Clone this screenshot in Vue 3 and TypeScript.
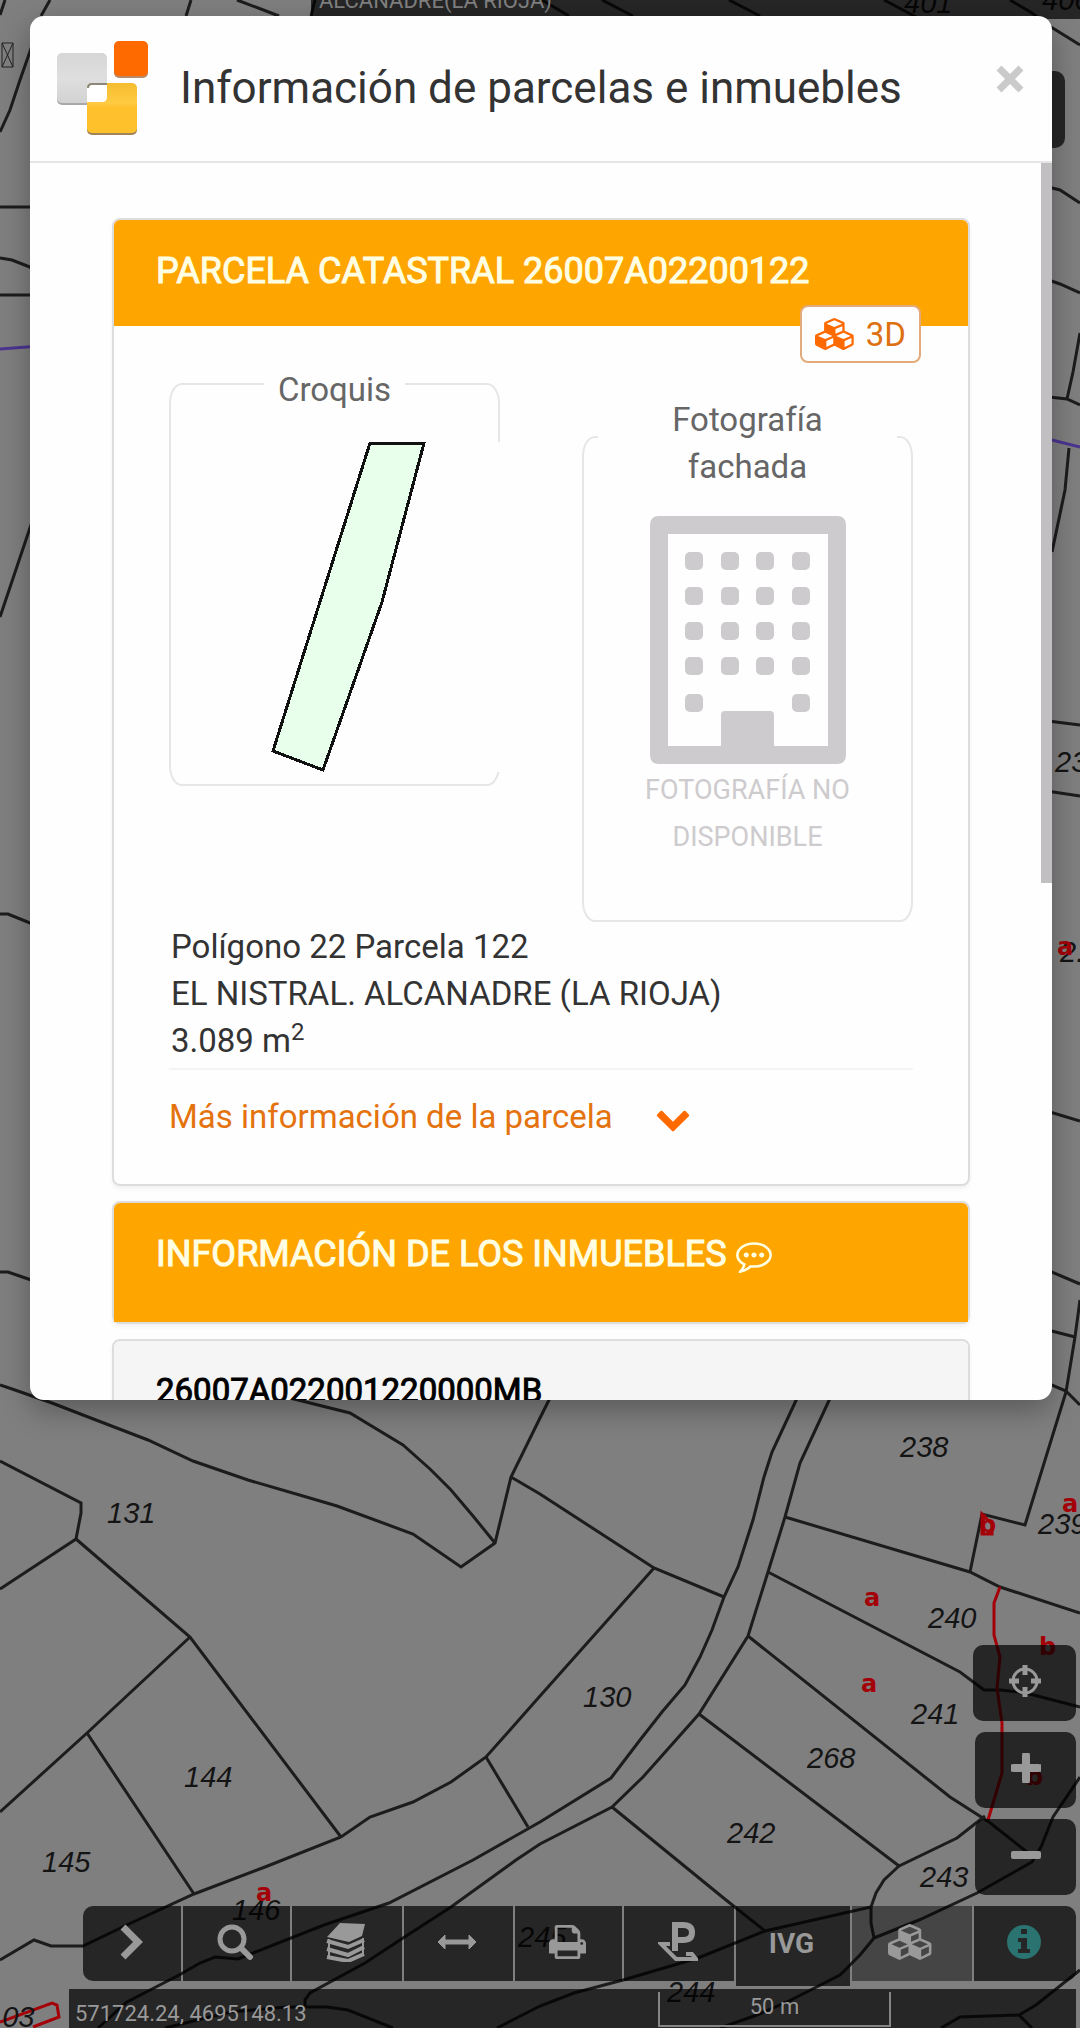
<script setup lang="ts">
interface MapLabel {
  text: string
  x: number
  y: number
}

const boundaries: string[] = [
  // Top strip
  'M5 0 0 15M50 0 41 16M191 0 186 16M237 0 279 16M315 0 311 16',
  'M542 0 569 16M602 0 633 16M729 0 760 16M884 0 918 18M1010 0 1032 13 1051 27 1080 45',
  // Left margin
  'M34 40 20 80 10 110 0 132M0 207H40M0 295H40M0 258 12 260 40 271M36 510 0 617M0 914H8L40 927M0 1272H8L40 1283',
  // Right margin
  'M1040 185 1060 190 1080 203M1040 277 1060 284 1080 293M1080 333 1073 372 1067 399M1040 396 1067 399 1080 405',
  'M1069 448 1065 490 1052 552M1040 720 1080 725M1040 790 1080 796M1040 1109 1080 1121M1040 1267 1080 1284',
  'M1040 1328 1075 1337M1080 1300 1075 1337 1066 1392M1040 1380 1066 1391 1080 1405',
  // Parcels on the left
  'M0 1385 15 1390 52 1403 83 1415 148 1440 193 1461 248 1480 303 1496 337 1506 413 1534 461 1567 495 1543 511 1477 540 1418 551 1396',
  'M290 1398 350 1413 403 1445 430 1469 451 1490 473 1516 495 1543',
  'M0 1461 81 1503V1513L76 1539 0 1589',
  'M76 1539 190 1637 341 1837M190 1637 87 1733 0 1812M87 1733 194 1894',
  'M511 1477 540 1494 654 1568 724 1597M654 1568 540 1696 486 1757 451 1782 413 1802 370 1817 341 1837 265 1867 194 1894 131 1923 83 1946H51L34 1940 0 1960',
  'M486 1757 528 1827',
  // Road edges
  'M799 1394 772 1452 764 1477 753 1520 738 1567 724 1597 712 1630 700 1657 685 1685 662 1712 640 1740 611 1778 540 1822 473 1860 389 1903 324 1925 238 1959 215 1957 200 1963 181 1974 127 2002 98 2028',
  'M832 1394 800 1463 785 1517 768 1572 748 1636 699 1714 643 1777 612 1807 540 1844 516 1860 451 1907 403 1938 365 1963 310 1993 305 2000V2007',
  'M165 2028 230 2012 286 2007H327L348 2010 393 2028',
  'M497 2028 540 2006 574 1993 623 1980 698 1958 765 1931 871 1907 876 1893 884 1880 899 1866',
  // Parcels on the right
  'M785 1517 970 1572 1000 1587 1080 1613M970 1572 982 1514 1025 1525 1066 1392',
  'M768 1572 960 1672 984 1690H1001L1026 1693 1080 1707',
  'M748 1636 950 1797 989 1822 1032 1856',
  'M699 1714 899 1866 957 1838 985 1816M612 1807 726 1900 765 1931',
  'M1080 1777 1053 1817 1041 1847 1032 1862 977 1893 919 1920 874 1938M871 1907V1923L874 1938 860 1955 840 1975 791 2000 757 2015 720 2028',
  'M1080 1970 1036 2005 1019 2015 960 2017 941 2028M1019 2015 1032 2028',
]

const labels: MapLabel[] = [
  { text: '401', x: 904, y: 13 },
  { text: '406', x: 1042, y: 10 },
  { text: '23', x: 1055, y: 772 },
  { text: '2.', x: 1060, y: 962 },
  { text: '238', x: 900, y: 1457 },
  { text: '239', x: 1038, y: 1534 },
  { text: '240', x: 928, y: 1628 },
  { text: '241', x: 911, y: 1724 },
  { text: '268', x: 807, y: 1768 },
  { text: '242', x: 727, y: 1843 },
  { text: '243', x: 920, y: 1887 },
  { text: '244', x: 667, y: 2002 },
  { text: '245', x: 518, y: 1947 },
  { text: '130', x: 583, y: 1707 },
  { text: '131', x: 107, y: 1523 },
  { text: '144', x: 184, y: 1787 },
  { text: '145', x: 42, y: 1872 },
  { text: '146', x: 232, y: 1920 },
  { text: '103', x: -14, y: 2027 },
]

const subLabels: MapLabel[] = [
  { text: 'a', x: 1057, y: 955 },
  { text: 'a', x: 864, y: 1606 },
  { text: 'a', x: 861, y: 1692 },
  { text: 'a', x: 1062, y: 1512 },
  { text: 'b', x: 979, y: 1533 },
  { text: 'b', x: 1039, y: 1655 },
  { text: 'b', x: 1026, y: 1785 },
  { text: 'a', x: 256, y: 1901 },
]

const windows: { x: number; y: number }[] = []
for (let row = 0; row < 5; row++) {
  for (let col = 0; col < 4; col++) {
    if (row === 4 && (col === 1 || col === 2)) continue
    windows.push({ x: 35 + col * 36 - (col > 1 ? 1 : 0), y: 36 + row * 35 + (row === 4 ? 2 : 0) })
  }
}

const cubes =
  'M640 1632l384-192v-314l-384 164v342zm-64-454l404-173-404-173-404 173zm1088 454l384-192v-314l-384 164v342zm-64-454l404-173-404-173-404 173zm-448-293l384-165v-266l-384 164v267zm-64-379l441-189-441-189-441 189zm1088 518v416q0 36-19 67t-52 47l-448 224q-25 14-57 14t-57-14l-448-224q-4-2-7-4-2 2-7 4l-448 224q-25 14-57 14t-57-14l-448-224q-33-16-52-47t-19-67v-416q0-38 21.5-70t56.5-48l434-186v-400q0-38 21.5-70t56.5-48l448-192q23-10 50-10t50 10l448 192q35 16 56.5 48t21.5 70v400l434 186q36 16 57 48t21 70z'
</script>

<template>
  <div class="page">
    <svg class="map" viewBox="0 0 1080 2028" preserveAspectRatio="xMidYMax slice" aria-hidden="true">
      <g class="lines">
        <path v-for="(d, i) in boundaries" :key="i" :d="d" />
      </g>
      <path class="purple" d="M0 349 40 346M1040 438 1052 440 1080 447" />
      <path
        class="red"
        d="M1000 1587 994 1603V1635L1000 1657 997 1688 1002 1723V1773L988 1820M0 2022 52 2003 57 2005 59 2017 33 2027M982 1514 992 1524V1534H982Z"
      />
      <text v-for="l in labels" :key="l.text + l.x" class="num" :x="l.x" :y="l.y">{{ l.text }}</text>
      <text v-for="(l, i) in subLabels" :key="i" class="sub" :x="l.x" :y="l.y">{{ l.text }}</text>
      <path class="missing" d="M2 43H13V67H2ZM2 43 13 67M13 43 2 67" />
    </svg>

    <div class="ui">
      <header class="place">ALCANADRE(LA RIOJA)</header>
      <button class="menu" type="button" aria-label="Menú"></button>

      <div class="zoom">
        <button class="locate" type="button" aria-label="Mi posición">
          <svg viewBox="0 0 34 34" width="34" height="34">
            <circle cx="17" cy="17" r="12" fill="none" stroke="currentColor" stroke-width="3" />
            <path d="M17 1V11M17 23V33M1 17H11M23 17H33" stroke="currentColor" stroke-width="5" />
          </svg>
        </button>
        <button type="button" aria-label="Acercar">
          <svg viewBox="0 0 30 30" width="30" height="30">
            <path d="M15 2V28M2 15H28" stroke="currentColor" stroke-width="8" stroke-linecap="butt" />
            <path d="M12 1H18M12 29H18M1 12V18M29 12V18" stroke="currentColor" stroke-width="2" stroke-linecap="round" />
          </svg>
        </button>
        <button type="button" aria-label="Alejar">
          <svg viewBox="0 0 30 30" width="30" height="30">
            <rect x="0" y="11" width="30" height="8" rx="2" fill="currentColor" />
          </svg>
        </button>
      </div>

      <nav class="toolbar">
        <button type="button" aria-label="Desplegar">
          <svg viewBox="0 0 24 36" width="24" height="36">
            <path d="M4 3 19 18 4 33" fill="none" stroke="currentColor" stroke-width="7" />
          </svg>
        </button>
        <button type="button" aria-label="Buscar">
          <svg viewBox="0 0 38 38" width="38" height="38">
            <circle cx="16" cy="16" r="12" fill="none" stroke="currentColor" stroke-width="5" />
            <path d="M25 25 34 34" stroke="currentColor" stroke-width="6" stroke-linecap="round" />
          </svg>
        </button>
        <button type="button" aria-label="Capas">
          <svg viewBox="0 0 40 40" width="40" height="40">
            <path d="M14 1 39 2 36 14 23 20 1 15Z" fill="currentColor" />
            <path
              d="M1 19 22 25 38 18M1 27 22 33 38 25M1 35 22 39 38 32"
              fill="none"
              stroke="currentColor"
              stroke-width="4"
            />
            <path d="M3 17V36M37 16V32" stroke="currentColor" stroke-width="2" />
          </svg>
        </button>
        <button type="button" aria-label="Medir">
          <svg viewBox="0 0 40 16" width="40" height="16">
            <path d="M7 8H33" stroke="currentColor" stroke-width="5" />
            <path d="M1 8 8 1V15ZM39 8 32 1V15Z" fill="currentColor" stroke="currentColor" stroke-linejoin="round" />
          </svg>
        </button>
        <button type="button" aria-label="Imprimir">
          <svg viewBox="0 0 1664 1792" width="37" height="40">
            <path
              fill="currentColor"
              d="M384 1536h896v-256h-896v256zm0-640h896v-384h-160q-40 0-68-28t-28-68v-160h-640v640zm1152 64q0-26-19-45t-45-19-45 19-19 45 19 45 45 19 45-19 19-45zm128 0v416q0 13-9.5 22.5t-22.5 9.5h-224v160q0 40-28 68t-68 28h-960q-40 0-68-28t-28-68v-160h-224q-13 0-22.5-9.5t-9.5-22.5v-416q0-79 56.5-135.5t135.5-56.5h64v-544q0-40 28-68t68-28h672q40 0 88 20t76 48l152 152q28 28 48 76t20 88v256h64q79 0 135.5 56.5t56.5 135.5z"
            />
          </svg>
        </button>
        <button type="button" aria-label="Parcela">
          <svg viewBox="0 0 40 40" width="40" height="40">
            <path
              d="M17 29V3H25Q34 3 34 10.500T25 18H17"
              fill="none"
              stroke="currentColor"
              stroke-width="6"
            />
            <path d="M12 22H3L18 37H38L34 32H28" fill="none" stroke="currentColor" stroke-width="4" />
          </svg>
        </button>
        <button class="ivg" type="button">IVG</button>
        <button class="active" type="button" aria-label="3D">
          <svg viewBox="0 0 2304 1792" width="46" height="38"><path fill="currentColor" :d="cubes" /></svg>
        </button>
        <button type="button" aria-label="Información">
          <svg class="info" viewBox="0 0 34 34" width="34" height="34">
            <circle cx="17" cy="17" r="17" fill="currentColor" />
            <path d="M14 4H20V9H14ZM11 13H20V24H23V28H11V24H14V17H11Z" fill="#262626" />
          </svg>
        </button>
      </nav>

      <footer class="status">
        <span class="coords">571724.24, 4695148.13</span>
        <span class="scale">50 m</span>
      </footer>
    </div>

    <section class="dialog" role="dialog" aria-labelledby="dialog-title">
      <header class="dialog-head">
        <svg class="logo" viewBox="0 0 92 95" width="92" height="95" aria-hidden="true">
          <defs>
            <linearGradient id="g-grey" x1="0" y1="0" x2="0" y2="1">
              <stop offset="0" stop-color="#d6d6d6" />
              <stop offset="0.5" stop-color="#dfdfdf" />
              <stop offset="1" stop-color="#d2d2d2" />
            </linearGradient>
            <linearGradient id="g-gold" x1="0" y1="0" x2="0" y2="1">
              <stop offset="0" stop-color="#f5bd30" />
              <stop offset="0.400" stop-color="#ffcb42" />
              <stop offset="0.500" stop-color="#ffc02c" />
              <stop offset="1" stop-color="#fcc12c" />
            </linearGradient>
          </defs>
          <rect x="0" y="14" width="50" height="50" rx="5" fill="#a9a9a9" />
          <rect x="0" y="12" width="50" height="50" rx="5" fill="url(#g-grey)" />
          <rect x="57" y="2" width="34" height="35" rx="5" fill="#b98a68" />
          <rect x="57" y="0" width="34" height="35" rx="5" fill="#ff6a00" />
          <rect x="30" y="44" width="50" height="50" rx="5" fill="#a08358" />
          <rect x="30" y="42" width="50" height="50" rx="5" fill="url(#g-gold)" />
          <path d="M30 48Q30 43 35 43H50V56Q50 61 45 61H30Z" fill="#fff" />
          <path d="M31 47Q31 43 35 43H50" fill="none" stroke="#8d8779" stroke-width="2" />
        </svg>
        <h1 id="dialog-title">Información de parcelas e inmuebles</h1>
        <button class="close" type="button" aria-label="Cerrar">
          <svg viewBox="0 0 28 28" width="28" height="28">
            <path d="M3 3 25 25M25 3 3 25" stroke="currentColor" stroke-width="7" />
          </svg>
        </button>
      </header>

      <div class="dialog-body">
        <article class="card">
          <h2>PARCELA CATASTRAL 26007A02200122</h2>
          <button class="three-d" type="button">
            <svg viewBox="0 0 2304 1792" width="41" height="34"><path fill="#ff6a00" :d="cubes" /></svg>
            3D
          </button>
          <div class="card-body">
            <div class="media">
              <fieldset class="sketch">
                <legend>Croquis</legend>
                <div class="sketch-image">
                  <svg viewBox="0 0 330 330" width="330" height="330">
                    <path d="M185 1H239L197 160 138 328 88 309Z" fill="#e8ffec" />
                    <path
                      d="M185 1H239L197 160 138 328 88 309Z"
                      fill="none"
                      stroke="#111"
                      stroke-width="3"
                      shape-rendering="crispEdges"
                    />
                  </svg>
                </div>
              </fieldset>
              <fieldset class="photo">
                <legend>Fotografía<br />fachada</legend>
                <svg viewBox="0 0 196 248" width="196" height="248" aria-hidden="true">
                  <g fill="#cdcbcd">
                    <path
                      fill-rule="evenodd"
                      d="M9 0H187Q196 0 196 9V239Q196 248 187 248H9Q0 248 0 239V9Q0 0 9 0ZM18 18V230H71V199Q71 195 75 195H120Q124 195 124 199V230H178V18Z"
                    />
                    <rect v-for="w in windows" :key="w.x + '-' + w.y" :x="w.x" :y="w.y" width="18" height="18" rx="5" />
                  </g>
                </svg>
                <p>FOTOGRAFÍA NO<br />DISPONIBLE</p>
              </fieldset>
            </div>
            <div class="address">
              Polígono 22 Parcela 122<br />
              EL NISTRAL. ALCANADRE (LA RIOJA)<br />
              3.089 m<sup>2</sup>
            </div>
            <a class="more" href="#">
              Más información de la parcela
              <svg viewBox="0 0 1792 1792" width="36" height="36" aria-hidden="true">
                <path
                  fill="#ff6a00"
                  d="M1683 808l-742 741q-19 19-45 19t-45-19l-742-741q-19-19-19-45.500t19-45.500l166-165q19-19 45-19t45 19l531 531 531-531q19-19 45-19t45 19l166 165q19 19 19 45.500t-19 45.500z"
                />
              </svg>
            </a>
          </div>
        </article>

        <article class="card">
          <h2 class="tall">
            INFORMACIÓN DE LOS INMUEBLES
            <svg viewBox="0 0 1792 1792" width="36" height="36" aria-hidden="true">
              <path
                fill="currentColor"
                d="M640 896q0 53-37.500 90.500t-90.500 37.500-90.500-37.500-37.500-90.500 37.500-90.500 90.500-37.500 90.500 37.500 37.500 90.500zm384 0q0 53-37.500 90.500t-90.500 37.500-90.500-37.500-37.500-90.500 37.500-90.500 90.500-37.500 90.500 37.500 37.500 90.500zm384 0q0 53-37.500 90.500t-90.500 37.500-90.500-37.500-37.500-90.500 37.500-90.500 90.500-37.500 90.500 37.500 37.500 90.500zm-512-512q-204 0-381.500 69.500t-282 187.500-104.500 255q0 112 71.500 213.500t201.500 175.500l87 50-27 96q-24 91-70 172 152-63 275-171l43-38 57 6q69 8 130 8 204 0 381.500-69.500t282-187.500 104.500-255-104.500-255-282-187.500-381.500-69.500zm896 512q0 174-120 321.500t-326 233-450 85.500q-70 0-145-8-198 175-460 242-49 14-114 22h-5q-15 0-27-10.500t-16-27.500v-1q-3-4-.5-12t2-10 4.500-9.500l6-9 7-8.500 8-9q7-8 31-34.500t34.500-38 31-39.500 32.500-51 27-59 26-76q-157-89-247.500-220t-90.500-281q0-130 71-248.500t191-204.500 286-136.500 348-50.500 348 50.500 286 136.500 191 204.500 71 248.500z"
              />
            </svg>
          </h2>
        </article>

        <article class="card">
          <h2 class="plain">26007A022001220000MB</h2>
        </article>
      </div>
      <div class="thumb"></div>
    </section>
  </div>
</template>

<style>
body {
  margin: 0;
  background: #807f80;
}
</style>

<style scoped>
.page {
  display: grid;
  grid-template: 100vh / 100%;
  overflow: hidden;
  font-family: Roboto, 'Liberation Sans', sans-serif;
  font-size: 33px;
  line-height: 47px;
  color: #333;
}
.page > * {
  grid-area: 1 / 1;
}
button {
  font: inherit;
  border: 0;
  padding: 0;
}

/* Map */
.map {
  width: 100%;
  height: 100%;
  background: #807f80;
}
.map path {
  fill: none;
  stroke-width: 3;
}
.lines {
  stroke: #1c1c1c;
}
.purple {
  stroke: #4c3590;
}
.red {
  stroke: #a30008;
}
.map .missing {
  stroke: #222;
  stroke-width: 1;
}
.num {
  font: italic 29px 'Liberation Sans', sans-serif;
  fill: #141414;
}
.sub {
  font: bold 24px 'DejaVu Sans', sans-serif;
  fill: #a30008;
}

/* Map controls */
.ui {
  display: flex;
  flex-direction: column;
  padding-right: 4px;
  color: #999;
}
.place {
  margin: 0 -4px 0 311px;
  padding-left: 8px;
  height: 19px;
  font-size: 22px;
  line-height: 1px;
  color: #808080;
  background: rgba(0, 0, 0, 0.7);
}
.menu {
  align-self: flex-end;
  margin: 52px 11px 0 0;
  width: 100px;
  height: 77px;
  border-radius: 10px;
  background: #262626;
}
.zoom {
  margin-top: auto;
  display: flex;
  flex-direction: column;
  align-items: flex-end;
  gap: 11px;
}
.zoom button,
.toolbar button {
  display: flex;
  align-items: center;
  justify-content: center;
  box-sizing: border-box;
  color: inherit;
  background: rgba(0, 0, 0, 0.7);
}
.zoom button {
  width: 101px;
  height: 76px;
  padding-bottom: 4px;
  border-radius: 10px;
}
.zoom .locate {
  width: 103px;
}
.toolbar {
  display: grid;
  grid-template-columns: 98fr 107fr 110fr 109fr 107fr 110fr 114fr 120fr 102fr;
  align-items: start;
  gap: 2px;
  height: 75px;
  margin: 11px 0 8px 83px;
}
.toolbar button {
  height: 75px;
  padding: 0 3px 3px 0;
}
.toolbar button:first-child {
  border-radius: 10px 0 0 10px;
}
.toolbar button:last-child {
  border-radius: 0 10px 10px 0;
}
.toolbar .ivg {
  height: 80px;
  padding-bottom: 6px;
  font-size: 28px;
  font-weight: 700;
}
.toolbar .active {
  background: rgba(0, 0, 0, 0.45);
}
.info {
  color: #2b7370;
}
.status {
  display: flex;
  margin-left: 69px;
  height: 39px;
  background: rgba(0, 0, 0, 0.7);
}
.coords {
  width: 583px;
  padding-left: 6px;
  font-size: 22px;
  line-height: 49px;
}
.scale {
  width: 229px;
  height: 33px;
  margin-top: 3px;
  border: solid #858585;
  border-width: 0 2px 2px;
  font-size: 22px;
  line-height: 29px;
  text-align: center;
}

/* Dialog */
.dialog {
  align-self: start;
  position: relative;
  margin: 16px 28px 0 30px;
  border-radius: 14px;
  overflow: hidden;
  background: #fefefe;
  box-shadow: 0 10px 30px rgba(0, 0, 0, 0.3);
}
.dialog-head {
  display: flex;
  align-items: center;
  gap: 31px;
  height: 145px;
  padding: 0 28px 0 27px;
  border-bottom: 2px solid #e5e5e5;
}
h1 {
  flex: 1;
  margin: 0;
  font-size: 44px;
  font-weight: 400;
  white-space: nowrap;
}
.close {
  display: flex;
  margin-bottom: 20px;
  color: #cacaca;
  background: none;
}
.dialog-body {
  max-height: 61vh;
  box-sizing: border-box;
  padding: 55px 82px 0;
  overflow: hidden;
}
.thumb {
  position: absolute;
  top: 147px;
  right: 0;
  width: 11px;
  height: 52%;
  background: #c1bfc1;
}
.card {
  position: relative;
  margin-bottom: 15px;
  border: 2px solid #ddd;
  border-radius: 8px;
  background: #fefefe;
  box-shadow: 0 3px 4px rgba(0, 0, 0, 0.05);
}
h2 {
  margin: 0;
  padding: 28px 42px 31px;
  border-radius: 6px 6px 0 0;
  font-size: 36px;
  font-weight: 400;
  -webkit-text-stroke: 1px currentColor;
  color: #ffffe4;
  background: #ffa500;
}
h2.tall {
  padding-bottom: 44px;
}
h2 svg {
  vertical-align: -7px;
}
h2.plain {
  padding-top: 26px;
  font-size: 33px;
  color: #000;
  background: #f5f5f5;
}
.three-d {
  position: absolute;
  top: 85px;
  right: 47px;
  display: flex;
  align-items: center;
  gap: 10px;
  height: 58px;
  padding: 0 13px;
  border: 2px solid #e3ab7c;
  border-radius: 8px;
  color: #dd7011;
  background: #fefefe;
}
.card-body {
  padding: 0 55px 44px;
}
.media {
  display: flex;
  align-items: flex-start;
  gap: 82px;
}
fieldset {
  flex: 1;
  min-width: 0;
  margin: 0;
  border: 2px solid #e6e6e6;
  border-radius: 13px / 20px;
  color: #666;
  text-align: center;
}
legend {
  margin: 0 auto;
  padding: 12px 14px 0;
}
.sketch {
  margin-top: 28px;
  padding: 0 14px 12px;
}
.photo {
  margin-top: 58px;
  padding: 0 14px 59px;
}
.photo legend {
  box-sizing: border-box;
  width: 100%;
}
.sketch-image {
  position: relative;
  margin: 29px -18px 0 0;
  background: #fefefe;
}
.sketch-image svg,
.photo svg {
  display: block;
}
.photo svg {
  margin: 26px auto 3px;
}
.photo p {
  margin: 0;
  font-size: 27px;
  color: #cdcbcd;
}
.address {
  padding: 1px 2px 4px;
  border-bottom: 2px solid #f4f4f4;
}
sup {
  font-size: 24px;
  line-height: 0;
  vertical-align: 12px;
}
.more {
  display: flex;
  align-items: center;
  gap: 42px;
  margin-top: 23px;
  color: #e4730f;
  text-decoration: none;
}
.more svg {
  margin-top: 3px;
}
</style>
